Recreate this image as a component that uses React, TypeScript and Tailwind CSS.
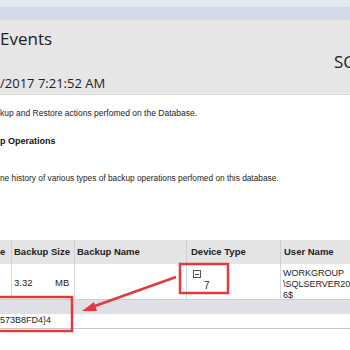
import React from "react";

export default function App() {
  const font = { fontFamily: '"Liberation Sans", Arial, sans-serif' };
  const seg = { fontFamily: '"Open Sans", "Noto Sans", sans-serif' };
  return (
    <div className="relative w-[350px] h-[350px] overflow-hidden bg-white" style={font}>
      {/* top bar */}
      <div className="h-[7px] bg-[#e3e7ee]" />
      <div className="h-[13px] bg-[#d4dae5]" />
      {/* header */}
      <div className="h-[75px] bg-[#e6e6e6] border-b border-[#d9d9d9] flex flex-col" style={seg}>
        <div className="text-[17px] leading-[22px] text-[#222] mt-[8px]">Events</div>
        <div className="flex justify-end">
          <div className="text-[17px] leading-[22px] text-[#222] mt-[1px] mr-[-4px]">SC</div>
        </div>
        <div className="text-[13px] leading-[18px] text-[#222] mt-[1px]">/2017 7:21:52 AM</div>
      </div>
      {/* descriptions */}
      <div className="text-[8.5px] leading-[11px] text-[#222] mt-[13px]">kup and Restore actions perfomed on the Database.</div>
      <div className="text-[9px] leading-[11px] font-bold text-[#111] mt-[17px]">p Operations</div>
      <div className="text-[8.3px] leading-[11px] text-[#222] mt-[26px]">ne history of various types of backup operations perfomed on this database.</div>
      {/* table */}
      <div className="mt-[56px] text-[9.5px]">
        <div className="grid grid-cols-[12px_63px_112px_94px_1fr] h-[24px] bg-[#e4e4e4] font-bold text-[#222] items-stretch">
          <div className="flex items-center border-r border-[#cfcfcf]">e</div>
          <div className="flex items-center pl-[2px] border-r border-[#cfcfcf]">Backup Size</div>
          <div className="flex items-center pl-[2px] border-r border-[#cfcfcf]">Backup Name</div>
          <div className="flex items-center pl-[4px] border-r border-[#cfcfcf]">Device Type</div>
          <div className="flex items-center pl-[3px]">User Name</div>
        </div>
        <div className="grid grid-cols-[12px_63px_112px_94px_1fr] h-[35px] bg-white text-[#222] font-normal">
          <div className="border-r border-[#d8d8d8]" />
          <div className="border-r border-[#d8d8d8] flex items-start pt-[12px] pl-[2px]">
            <span className="w-[41px]">3.32</span>
            <span>MB</span>
          </div>
          <div className="border-r border-[#d8d8d8]" />
          <div className="border-r border-[#d8d8d8] pl-[6px] pt-[6px] relative">
            <div className="w-[8px] h-[8px] border border-[#555] flex items-center justify-center">
              <div className="w-[4px] h-[1px] bg-[#444]" />
            </div>
            <div className="absolute left-[17px] top-[14px] text-[10px]">7</div>
          </div>
          <div className="pl-[2px] pt-[4px] leading-[11px] text-[9px] overflow-hidden whitespace-nowrap">
            <div>WORKGROUP</div>
            <div>\SQLSERVER201</div>
            <div>6$</div>
          </div>
        </div>
        <div className="h-[15px] bg-[#dfe0e6] border-t border-[#cfcfcf]" />
        <div className="h-[15px] bg-white border-b border-[#c8c8c8] text-[9px] text-[#222] flex items-center">{"573B8FD4}4"}</div>
      </div>
      {/* annotations */}
      <svg className="absolute left-0 top-0" width="350" height="350" viewBox="0 0 350 350">
        <rect x="-10" y="297" width="82" height="34" fill="none" stroke="#e0393f" strokeWidth="2.5" />
        <rect x="180" y="264" width="48" height="29" fill="none" stroke="#e0393f" strokeWidth="2.5" />
        <line x1="176" y1="277" x2="92" y2="307" stroke="#e0393f" strokeWidth="2.5" />
        <polygon points="82,311 94,302 97,311" fill="#e0393f" />
      </svg>
    </div>
  );
}
